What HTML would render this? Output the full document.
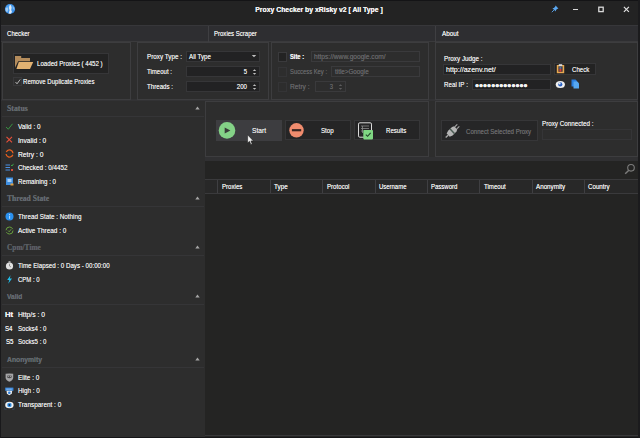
<!DOCTYPE html>
<html><head><meta charset="utf-8"><title>Proxy Checker by xRisky v2</title>
<style>
html,body{margin:0;padding:0;background:#2d2d2d;}
body{width:640px;height:438px;position:relative;overflow:hidden;font-family:"Liberation Sans",sans-serif;}
.a{position:absolute;}
.t{white-space:nowrap;text-shadow:0 0 0.5px currentColor;}
</style></head><body>
<div class="a" style="left:0px;top:0px;width:640px;height:26px;background:#232323;"></div>
<svg class="a" style="left:4px;top:3px" width="12" height="12" viewBox="0 0 12 12"><defs><radialGradient id="gg" cx="0.45" cy="0.4" r="0.65"><stop offset="0" stop-color="#55a8f2"/><stop offset="1" stop-color="#2f86e4"/></radialGradient></defs><circle cx="6" cy="6" r="5.100" fill="url(#gg)"/><path d="M5.400 2.400 L6.900 2.100 L7.600 4.500 L7.200 7 L8 9 L6.600 10.800 L4.500 10.500 L5.600 7.500 L5 5 Z" fill="#eef2f6" opacity="0.92"/><path d="M1.400 5.500 L3.200 4 L4.200 6 L3.400 9.200 L1.800 8.200 Z" fill="#b4d6f6" opacity="0.85"/><path d="M8.500 3 L10.200 4.500 L10.500 7.200 L9 6 Z" fill="#9ccaf6" opacity="0.75"/></svg>
<div class="a t" style="top:5.2px;line-height:10px;font-size:7.6px;color:#f0f0f0;font-weight:bold;left:119.25px;width:400px;text-align:center;transform:scaleX(0.901);transform-origin:50% 50%;">Proxy Checker by xRisky v2 [ All Type ]</div>
<svg class="a" style="left:551px;top:5px" width="8" height="8" viewBox="0 0 8 8"><path d="M4.6 0.6 L7.4 3.4 L6.2 3.9 L5 5.1 L4.8 6.6 L1.4 3.2 L2.9 3 L4.1 1.8 Z" fill="#5aa6ee"/><path d="M3 5 L0.8 7.200" stroke="#5aa6ee" stroke-width="0.9"/></svg>
<div class="a" style="left:573px;top:9px;width:5px;height:1px;background:#d8d8d8;"></div>
<svg class="a" style="left:597px;top:5px" width="8" height="9" viewBox="0 0 8 9"><rect x="1.800" y="2.200" width="4.400" height="4.400" fill="none" stroke="#dadada" stroke-width="1.3"/></svg>
<svg class="a" style="left:623px;top:6px" width="7" height="7" viewBox="0 0 7 7"><path d="M0.9 0.9 L5.900 5.900 M5.900 0.9 L0.9 5.900" stroke="#e0e0e0" stroke-width="1.2"/></svg>
<div class="a" style="left:0px;top:26px;width:640px;height:16px;background:#2e2e31;"></div>
<div class="a" style="left:0px;top:25px;width:640px;height:1px;background:#37373a;"></div>
<div class="a" style="left:0px;top:41px;width:640px;height:1px;background:#3a3a3c;"></div>
<div class="a" style="left:208px;top:26px;width:1px;height:16px;background:#3f3f42;"></div>
<div class="a" style="left:435px;top:26px;width:1px;height:16px;background:#3f3f42;"></div>
<div class="a t" style="top:29.3px;line-height:10px;font-size:7.2px;color:#e8e8e8;left:7px;transform:scaleX(0.843);transform-origin:0 50%;">Checker</div>
<div class="a t" style="top:29.3px;line-height:10px;font-size:7.2px;color:#e8e8e8;left:213.8px;transform:scaleX(0.838);transform-origin:0 50%;">Proxies Scraper</div>
<div class="a t" style="top:29.3px;line-height:10px;font-size:7.2px;color:#e8e8e8;left:441.7px;transform:scaleX(0.877);transform-origin:0 50%;">About</div>
<div class="a" style="left:0px;top:42px;width:640px;height:396px;background:#2d2d2d;"></div>
<div class="a" style="left:1px;top:99.3px;width:636.5px;height:2px;background:#323234;"></div>
<div class="a" style="left:2px;top:42px;width:129px;height:57.5px;border:1px solid #3d3d3f;box-sizing:border-box;"></div>
<div class="a" style="left:137px;top:42px;width:132px;height:57.5px;border:1px solid #3d3d3f;box-sizing:border-box;"></div>
<div class="a" style="left:271px;top:42px;width:158px;height:57.5px;border:1px solid #3d3d3f;box-sizing:border-box;"></div>
<div class="a" style="left:435px;top:42px;width:202.5px;height:57.5px;border:1px solid #3d3d3f;box-sizing:border-box;"></div>
<div class="a" style="left:12.7px;top:53.3px;width:96.2px;height:20.5px;background:#232323;border:1px solid #363638;box-sizing:border-box;"></div>
<svg class="a" style="left:14px;top:55px" width="20" height="15" viewBox="0 0 20 15"><path d="M1 1 L7.200 1 L7.200 3 L16 3 L16 6.300 L4.200 6.300 L1 12.800 Z" fill="#b48c5c"/><path d="M4.800 7 L19.200 7 L16 13.900 L2.400 13.900 Z" fill="#e2b272"/></svg>
<div class="a t" style="top:59.2px;line-height:10px;font-size:7.2px;color:#e2e2e2;left:37.2px;transform:scaleX(0.856);transform-origin:0 50%;">Loaded Proxies ( 4452 )</div>
<div class="a" style="left:12.5px;top:77px;width:9px;height:9px;border:1px solid #38383a;box-sizing:border-box;"></div>
<svg class="a" style="left:13.5px;top:78px" width="8" height="8" viewBox="0 0 8 8"><path d="M1.5 4 L3 5.800 L6.2 1.500" stroke="#d4d4d4" stroke-width="0.8" fill="none"/></svg>
<div class="a t" style="top:77.4px;line-height:10px;font-size:7.2px;color:#e2e2e2;left:23.1px;transform:scaleX(0.844);transform-origin:0 50%;">Remove Duplicate Proxies</div>
<div class="a t" style="top:52.0px;line-height:10px;font-size:7.2px;color:#e2e2e2;left:147px;transform:scaleX(0.878);transform-origin:0 50%;">Proxy Type :</div>
<div class="a t" style="top:67.0px;line-height:10px;font-size:7.2px;color:#e2e2e2;left:147px;transform:scaleX(0.841);transform-origin:0 50%;">Timeout :</div>
<div class="a t" style="top:82.0px;line-height:10px;font-size:7.2px;color:#e2e2e2;left:147px;transform:scaleX(0.855);transform-origin:0 50%;">Threads :</div>
<div class="a" style="left:186px;top:51.3px;width:74px;height:11px;background:#222223;border:1px solid #363638;box-sizing:border-box;"></div>
<div class="a" style="left:186px;top:66.3px;width:74px;height:11px;background:#222223;border:1px solid #363638;box-sizing:border-box;"></div>
<div class="a" style="left:186px;top:81.3px;width:74px;height:11px;background:#222223;border:1px solid #363638;box-sizing:border-box;"></div>
<div class="a t" style="top:52.0px;line-height:10px;font-size:7.2px;color:#e2e2e2;left:189.2px;transform:scaleX(0.863);transform-origin:0 50%;">All Type</div>
<svg class="a" style="left:251px;top:54.3px" width="6" height="4" viewBox="0 0 6 4"><path d="M0.8 0.9 L5.200 0.9 L3 3.3 Z" fill="#c0c0c0"/></svg>
<div class="a t" style="top:67.0px;line-height:10px;font-size:7.2px;color:#e2e2e2;right:393px;transform:scaleX(0.824);transform-origin:100% 50%;">5</div>
<div class="a t" style="top:82.0px;line-height:10px;font-size:7.2px;color:#e2e2e2;right:393px;transform:scaleX(0.858);transform-origin:100% 50%;">200</div>
<svg class="a" style="left:252px;top:68.3px" width="5" height="8" viewBox="0 0 5 8"><path d="M0.8 3 L2.500 1.2 L4.2 3 Z M0.8 5 L2.500 6.800 L4.2 5 Z" fill="#c0c0c0"/></svg>
<svg class="a" style="left:252px;top:83.3px" width="5" height="8" viewBox="0 0 5 8"><path d="M0.8 3 L2.500 1.2 L4.2 3 Z M0.8 5 L2.500 6.800 L4.2 5 Z" fill="#c0c0c0"/></svg>
<div class="a" style="left:278px;top:51.5px;width:9.2px;height:10px;background:#232323;border:1px solid #3a3a3c;box-sizing:border-box;"></div>
<div class="a" style="left:278px;top:66.5px;width:9.2px;height:10px;border:1px solid #343436;box-sizing:border-box;"></div>
<div class="a" style="left:278px;top:81.5px;width:9.2px;height:10px;border:1px solid #343436;box-sizing:border-box;"></div>
<div class="a t" style="top:52.0px;line-height:10px;font-size:7.2px;color:#ededed;font-weight:bold;left:290.3px;transform:scaleX(0.801);transform-origin:0 50%;">Site :</div>
<div class="a t" style="top:67.0px;line-height:10px;font-size:7.2px;color:#646466;left:290.3px;transform:scaleX(0.813);transform-origin:0 50%;">Success Key :</div>
<div class="a t" style="top:82.0px;line-height:10px;font-size:7.2px;color:#646466;left:290.3px;transform:scaleX(0.929);transform-origin:0 50%;">Retry :</div>
<div class="a" style="left:311px;top:51.3px;width:109px;height:11px;border:1px solid #3a3a3c;box-sizing:border-box;"></div>
<div class="a t" style="top:52.0px;line-height:10px;font-size:7.2px;color:#646466;left:314.2px;transform:scaleX(0.92);transform-origin:0 50%;">https://www.google.com/</div>
<div class="a" style="left:331px;top:66.3px;width:89px;height:11px;border:1px solid #3a3a3c;box-sizing:border-box;"></div>
<div class="a t" style="top:67.0px;line-height:10px;font-size:7.2px;color:#646466;left:334.7px;transform:scaleX(0.875);transform-origin:0 50%;">title&gt;Google</div>
<div class="a" style="left:315px;top:81.3px;width:31px;height:11px;border:1px solid #3a3a3c;box-sizing:border-box;"></div>
<div class="a t" style="top:82.0px;line-height:10px;font-size:7.2px;color:#646466;right:307px;transform:scaleX(0.824);transform-origin:100% 50%;">3</div>
<svg class="a" style="left:338px;top:83.3px" width="5" height="8" viewBox="0 0 5 8"><path d="M0.8 3 L2.500 1.2 L4.2 3 Z M0.8 5 L2.500 6.800 L4.2 5 Z" fill="#5c5c5e"/></svg>
<div class="a t" style="top:53.7px;line-height:10px;font-size:7.2px;color:#e2e2e2;left:443.8px;transform:scaleX(0.879);transform-origin:0 50%;">Proxy Judge :</div>
<div class="a" style="left:443px;top:64px;width:108px;height:11px;background:#222223;border:1px solid #363638;box-sizing:border-box;"></div>
<div class="a t" style="top:65.2px;line-height:10px;font-size:7.2px;color:#e2e2e2;left:445.7px;transform:scaleX(0.984);transform-origin:0 50%;">http://azenv.net/</div>
<div class="a" style="left:554.4px;top:63.2px;width:41.5px;height:11.4px;background:#232323;border:1px solid #363638;box-sizing:border-box;"></div>
<div class="a t" style="top:65.2px;line-height:10px;font-size:7.2px;color:#e2e2e2;left:571.7px;transform:scaleX(0.848);transform-origin:0 50%;">Check</div>
<svg class="a" style="left:556px;top:64px" width="9" height="10" viewBox="0 0 9 10"><rect x="0.800" y="1" width="7.400" height="8.200" fill="#e8a850"/><rect x="2.400" y="2.200" width="4.200" height="5.600" fill="#35353a"/><rect x="2.800" y="0.200" width="3.400" height="2" fill="#dcdcdc"/><rect x="3.400" y="4.800" width="2" height="2.800" fill="#d83a3a"/><rect x="3.400" y="3.300" width="2" height="1.300" fill="#5a8ad8"/></svg>
<div class="a t" style="top:79.7px;line-height:10px;font-size:7.2px;color:#e2e2e2;left:443.8px;transform:scaleX(0.87);transform-origin:0 50%;">Real IP :</div>
<div class="a" style="left:471.5px;top:78.8px;width:79.2px;height:11px;background:#222223;border:1px solid #363638;box-sizing:border-box;"></div>
<div class="a t" style="top:80.7px;line-height:10px;font-size:7.4px;color:#f4f4f4;left:474.7px;transform:scaleX(1.0);transform-origin:0 50%;letter-spacing:-0.41px;">●●●●●●●●●●●●●</div>
<svg class="a" style="left:555.3px;top:80px" width="11" height="9" viewBox="0 0 11 9"><ellipse cx="5.300" cy="4.400" rx="4.600" ry="3.500" fill="#f0f0f0"/><circle cx="5.300" cy="4.400" r="2.100" fill="#2a62c4"/><circle cx="4.600" cy="3.600" r="1" fill="#f0f0f0"/></svg>
<svg class="a" style="left:571.2px;top:79.2px" width="9" height="11" viewBox="0 0 9 11"><path d="M0.500 0.500 H4.500 L6 2 V7.500 H0.500 Z" fill="#2a7fe0"/><path d="M2.500 2.500 H6.300 L8 4.200 V9.600 H2.500 Z" fill="#56a8f2"/></svg>
<div class="a t" style="top:104.0px;line-height:10px;font-size:7.9px;color:#62686e;font-weight:bold;font-family:Liberation Serif,serif;left:7.1px;transform:scaleX(0.987);transform-origin:0 50%;">Status</div>
<svg class="a" style="left:194.5px;top:105.89999999999999px" width="5" height="4" viewBox="0 0 5 4"><path d="M0.3 3.500 L2.500 0.6 L4.700 3.500 Z" fill="#a6a6a6"/></svg>
<div class="a" style="left:2px;top:116.0px;width:202px;height:1px;background:#353537;"></div>
<div class="a t" style="top:194.0px;line-height:10px;font-size:7.9px;color:#62686e;font-weight:bold;font-family:Liberation Serif,serif;left:7.1px;transform:scaleX(0.958);transform-origin:0 50%;">Thread State</div>
<svg class="a" style="left:194.5px;top:195.9px" width="5" height="4" viewBox="0 0 5 4"><path d="M0.3 3.500 L2.500 0.6 L4.700 3.500 Z" fill="#a6a6a6"/></svg>
<div class="a" style="left:2px;top:206.0px;width:202px;height:1px;background:#353537;"></div>
<div class="a t" style="top:243.0px;line-height:10px;font-size:7.9px;color:#5a5e64;font-weight:bold;font-family:Liberation Serif,serif;left:7.1px;transform:scaleX(0.934);transform-origin:0 50%;">Cpm/Time</div>
<svg class="a" style="left:194.5px;top:244.9px" width="5" height="4" viewBox="0 0 5 4"><path d="M0.3 3.500 L2.500 0.6 L4.700 3.500 Z" fill="#a6a6a6"/></svg>
<div class="a" style="left:2px;top:255.0px;width:202px;height:1px;background:#353537;"></div>
<div class="a t" style="top:292.0px;line-height:10px;font-size:7.4px;color:#62686e;font-weight:bold;left:7.1px;transform:scaleX(0.886);transform-origin:0 50%;">Valid</div>
<svg class="a" style="left:194.5px;top:293.90000000000003px" width="5" height="4" viewBox="0 0 5 4"><path d="M0.3 3.500 L2.500 0.6 L4.700 3.500 Z" fill="#a6a6a6"/></svg>
<div class="a" style="left:2px;top:304.0px;width:202px;height:1px;background:#353537;"></div>
<div class="a t" style="top:355.0px;line-height:10px;font-size:7.4px;color:#62686e;font-weight:bold;left:7.1px;transform:scaleX(0.915);transform-origin:0 50%;">Anonymity</div>
<svg class="a" style="left:194.5px;top:356.90000000000003px" width="5" height="4" viewBox="0 0 5 4"><path d="M0.3 3.500 L2.500 0.6 L4.700 3.500 Z" fill="#a6a6a6"/></svg>
<div class="a" style="left:2px;top:367.0px;width:202px;height:1px;background:#353537;"></div>
<div class="a t" style="top:121.7px;line-height:10px;font-size:7.2px;color:#e2e2e2;left:17.7px;transform:scaleX(0.883);transform-origin:0 50%;">Valid : 0</div>
<div class="a t" style="top:135.5px;line-height:10px;font-size:7.2px;color:#e2e2e2;left:17.7px;transform:scaleX(0.918);transform-origin:0 50%;">Invalid : 0</div>
<div class="a t" style="top:149.8px;line-height:10px;font-size:7.2px;color:#e2e2e2;left:17.7px;transform:scaleX(0.937);transform-origin:0 50%;">Retry : 0</div>
<div class="a t" style="top:163.0px;line-height:10px;font-size:7.2px;color:#e2e2e2;left:17.7px;transform:scaleX(0.879);transform-origin:0 50%;">Checked : 0/4452</div>
<div class="a t" style="top:176.8px;line-height:10px;font-size:7.2px;color:#e2e2e2;left:17.7px;transform:scaleX(0.858);transform-origin:0 50%;">Remaining : 0</div>
<div class="a t" style="top:212.2px;line-height:10px;font-size:7.2px;color:#e2e2e2;left:17.7px;transform:scaleX(0.877);transform-origin:0 50%;">Thread State : Nothing</div>
<div class="a t" style="top:226.2px;line-height:10px;font-size:7.2px;color:#e2e2e2;left:17.7px;transform:scaleX(0.89);transform-origin:0 50%;">Active Thread : 0</div>
<div class="a t" style="top:261.2px;line-height:10px;font-size:7.2px;color:#e2e2e2;left:17.7px;transform:scaleX(0.861);transform-origin:0 50%;">Time Elapsed : 0 Days - 00:00:00</div>
<div class="a t" style="top:275.2px;line-height:10px;font-size:7.2px;color:#e2e2e2;left:17.7px;transform:scaleX(0.834);transform-origin:0 50%;">CPM : 0</div>
<div class="a t" style="top:310.2px;line-height:10px;font-size:7.2px;color:#e2e2e2;left:17.7px;transform:scaleX(0.937);transform-origin:0 50%;">Http/s : 0</div>
<div class="a t" style="top:324.2px;line-height:10px;font-size:7.2px;color:#e2e2e2;left:17.7px;transform:scaleX(0.848);transform-origin:0 50%;">Socks4 : 0</div>
<div class="a t" style="top:337.3px;line-height:10px;font-size:7.2px;color:#e2e2e2;left:17.7px;transform:scaleX(0.848);transform-origin:0 50%;">Socks5 : 0</div>
<div class="a t" style="top:372.7px;line-height:10px;font-size:7.2px;color:#e2e2e2;left:17.7px;transform:scaleX(0.887);transform-origin:0 50%;">Elite : 0</div>
<div class="a t" style="top:386.2px;line-height:10px;font-size:7.2px;color:#e2e2e2;left:17.7px;transform:scaleX(0.875);transform-origin:0 50%;">High : 0</div>
<div class="a t" style="top:400.2px;line-height:10px;font-size:7.2px;color:#e2e2e2;left:17.7px;transform:scaleX(0.892);transform-origin:0 50%;">Transparent : 0</div>
<svg class="a" style="left:5px;top:122.2px" width="9" height="9" viewBox="0 0 9 9"><path d="M1 5 L3.300 7.200 L7.500 1.800" stroke="#3a9e44" stroke-width="0.9" fill="none"/></svg>
<svg class="a" style="left:5px;top:135.3px" width="9" height="9" viewBox="0 0 9 9"><path d="M1.5 1.8 L7 7.300 M7 1.8 L1.5 7.300" stroke="#e8503a" stroke-width="1.1" fill="none"/></svg>
<svg class="a" style="left:4.6px;top:149.4px" width="9" height="9" viewBox="0 0 9 9"><circle cx="4.500" cy="4.500" r="3.500" stroke="#e8601e" stroke-width="1.3" fill="none" stroke-dasharray="9 2" transform="rotate(20 4.500 4.500)"/></svg>
<svg class="a" style="left:5px;top:163.2px" width="9" height="9" viewBox="0 0 9 9"><path d="M0.5 2 H5 M0.5 4.5 H5 M0.5 7 H5" stroke="#4a90e2" stroke-width="1"/><path d="M6 2 L7 3 L8.5 0.8" stroke="#3fae49" stroke-width="0.9" fill="none"/><path d="M6 6 L8 8 M8 6 L6 8" stroke="#e8503a" stroke-width="0.9"/></svg>
<svg class="a" style="left:5px;top:177.3px" width="9" height="9" viewBox="0 0 9 9"><rect x="1" y="0.5" width="7" height="7.5" fill="#3f8fe0"/><rect x="2.5" y="2" width="4" height="3" fill="#a8d0f8"/><rect x="5.5" y="6.5" width="3" height="2" fill="#e0a040"/></svg>
<svg class="a" style="left:4.7px;top:212.1px" width="9" height="9" viewBox="0 0 9 9"><circle cx="4.500" cy="4.500" r="4" fill="#2a90ee"/><rect x="4" y="3.800" width="1.100" height="3" fill="#bfe0fb" opacity="0.85"/><rect x="4" y="2" width="1.100" height="1.100" fill="#bfe0fb" opacity="0.85"/></svg>
<svg class="a" style="left:5px;top:226px" width="9" height="9" viewBox="0 0 9 9"><circle cx="4.5" cy="4.5" r="3.5" stroke="#6fae3f" stroke-width="0.9" fill="none" stroke-dasharray="9 2"/><path d="M3 4.5 L4.2 5.8 L6.2 3.2" stroke="#6fae3f" stroke-width="0.8" fill="none"/></svg>
<svg class="a" style="left:5px;top:261px" width="9" height="9" viewBox="0 0 9 9"><circle cx="4.5" cy="5" r="3.6" fill="#e0e0e0"/><rect x="3.5" y="0.3" width="2" height="1.3" fill="#d0d0d0"/><path d="M4.5 5 L4.5 2.8 M4.5 5 L6 6" stroke="#707070" stroke-width="0.7"/></svg>
<svg class="a" style="left:5px;top:275px" width="9" height="9" viewBox="0 0 9 9"><path d="M5.5 0.3 L2.2 5 L4.3 5 L3.2 8.8 L7 3.6 L4.8 3.6 Z" fill="#22c0ee"/></svg>
<div class="a t" style="top:309.9px;line-height:10px;font-size:7.8px;color:#f0f0f0;font-weight:bold;left:5.1px;transform:scaleX(0.984);transform-origin:0 50%;">Ht</div>
<div class="a t" style="top:323.7px;line-height:10px;font-size:7.6px;color:#f0f0f0;left:5.3px;transform:scaleX(0.807);transform-origin:0 50%;">S4</div>
<div class="a t" style="top:336.9px;line-height:10px;font-size:7.6px;color:#f0f0f0;left:5.5px;transform:scaleX(0.807);transform-origin:0 50%;">S5</div>
<svg class="a" style="left:5px;top:372.8px" width="9" height="9" viewBox="0 0 9 9"><path d="M0.600 0.800 Q4.500 0 8.200 0.800 L8.200 4.800 Q8 7.400 4.400 8.800 Q0.800 7.400 0.600 4.800 Z" fill="#a4a4a6"/><path d="M2 2.800 Q4.400 2 6.800 2.800 L6.800 4.300 Q4.400 6 2 4.300 Z" fill="#4a4a4c"/><rect x="2.600" y="3.200" width="1.300" height="0.800" fill="#b0b0b0"/><rect x="4.900" y="3.200" width="1.300" height="0.800" fill="#b0b0b0"/></svg>
<svg class="a" style="left:5px;top:386.7px" width="9" height="9" viewBox="0 0 9 9"><rect x="0.200" y="0.600" width="8.200" height="3.200" fill="#3a8ae0"/><path d="M1.500 2.200 H7.200" stroke="#e8f0f8" stroke-width="0.7" stroke-dasharray="1.2 0.7"/><path d="M1.500 3.800 L7.200 3.800 L6.800 6.800 L4.300 8.300 L1.900 6.800 Z" fill="#ececec"/><circle cx="4.300" cy="5.700" r="1.300" fill="#2f80dc"/></svg>
<svg class="a" style="left:4px;top:399.5px" width="11" height="10" viewBox="0 0 11 10"><path d="M0.600 2.500 V0.600 H2.800 M8 0.600 H10.200 V2.500 M10.200 7.500 V9.400 H8 M2.800 9.400 H0.600 V7.500" stroke="#34485e" stroke-width="0.7" fill="none"/><ellipse cx="5.400" cy="5" rx="4.200" ry="3.200" fill="#f2f2f2"/><circle cx="5.400" cy="5" r="2.300" fill="#3a9af0"/><circle cx="5.400" cy="5" r="1" fill="#1a2a48"/></svg>
<div class="a" style="left:204.5px;top:101px;width:224.5px;height:56px;border:1px solid #3d3d3f;box-sizing:border-box;"></div>
<div class="a" style="left:435px;top:101px;width:202.5px;height:56px;border:1px solid #3d3d3f;box-sizing:border-box;"></div>
<div class="a" style="left:216px;top:120.2px;width:66.1px;height:20.4px;background:#3d3d40;"></div>
<div class="a" style="left:285.2px;top:120.2px;width:65.8px;height:20px;background:#252526;border:1px solid #363638;box-sizing:border-box;"></div>
<div class="a" style="left:354.2px;top:120.2px;width:65.8px;height:20px;background:#252526;border:1px solid #363638;box-sizing:border-box;"></div>
<div class="a t" style="top:126.3px;line-height:10px;font-size:7.2px;color:#e2e2e2;left:251.9px;transform:scaleX(0.921);transform-origin:0 50%;">Start</div>
<div class="a t" style="top:126.3px;line-height:10px;font-size:7.2px;color:#e2e2e2;left:321.3px;transform:scaleX(0.857);transform-origin:0 50%;">Stop</div>
<div class="a t" style="top:126.3px;line-height:10px;font-size:7.2px;color:#e2e2e2;left:386.1px;transform:scaleX(0.85);transform-origin:0 50%;">Results</div>
<svg class="a" style="left:218px;top:121px" width="18" height="19" viewBox="0 0 18 19"><circle cx="9" cy="9.400" r="8.3" fill="#84d287"/><path d="M6.700 6.500 L12.400 9.500 L6.700 12.500 Z" fill="#3a3d3a"/></svg>
<svg class="a" style="left:288px;top:122px" width="17" height="17" viewBox="0 0 17 17"><circle cx="8.5" cy="8.300" r="7.2" fill="#f08c6e"/><rect x="3.900" y="7.100" width="9.300" height="2.200" fill="#3a2622"/></svg>
<svg class="a" style="left:356px;top:121px" width="19" height="20" viewBox="0 0 19 20"><rect x="2.500" y="1.800" width="13" height="14.400" rx="1.3" fill="none" stroke="#dcdcdc" stroke-width="1"/><path d="M5 5 H13 M5 7.500 H13 M5 10 H7 M6.500 5 V12" stroke="#8c8c8c" stroke-width="0.8" fill="none"/><rect x="7.300" y="9" width="9.700" height="9.400" rx="0.8" fill="#7fd783"/><path d="M9.800 13.600 L11.600 15.300 L14.600 11.800" stroke="#23422a" stroke-width="1.1" fill="none"/></svg>
<div class="a" style="left:441px;top:120.3px;width:97.2px;height:21.1px;background:#262627;border:1px solid #363638;box-sizing:border-box;"></div>
<div class="a t" style="top:127.2px;line-height:10px;font-size:7.2px;color:#68686a;left:466.4px;transform:scaleX(0.845);transform-origin:0 50%;">Connect Selected Proxy</div>
<svg class="a" style="left:444px;top:123px" width="17" height="16" viewBox="0 0 17 16"><g transform="rotate(-44 8.500 8)"><rect x="-1" y="7.300" width="3.500" height="1.400" fill="#a8a8a8"/><path d="M2.500 5.800 L5.500 4.800 L11 4.800 L13 5.800 L13 10.200 L11 11.200 L5.500 11.200 L2.500 10.200 Z" fill="#b4b4b4"/><rect x="7.400" y="4.600" width="1.500" height="6.800" fill="#4a5a52"/><rect x="13" y="6" width="3.600" height="1.100" fill="#a8a8a8"/><rect x="13" y="8.900" width="3.600" height="1.100" fill="#a8a8a8"/></g></svg>
<div class="a t" style="top:119.3px;line-height:10px;font-size:7.2px;color:#e2e2e2;left:542px;transform:scaleX(0.871);transform-origin:0 50%;">Proxy Connected :</div>
<div class="a" style="left:541.5px;top:129px;width:90px;height:11px;border:1px solid #353537;box-sizing:border-box;"></div>
<div class="a" style="left:204.5px;top:157px;width:433px;height:3.5px;background:#303032;"></div>
<div class="a" style="left:204.5px;top:160.5px;width:433px;height:18.5px;background:#242423;"></div>
<svg class="a" style="left:624px;top:163px" width="12" height="12" viewBox="0 0 12 12"><circle cx="7" cy="4.800" r="3.3" stroke="#7c7c7c" stroke-width="1.1" fill="none"/><path d="M4.6 7.400 L1.2 10.800" stroke="#7c7c7c" stroke-width="1.4"/></svg>
<div class="a" style="left:204.5px;top:179px;width:433px;height:14.5px;background:#282828;"></div>
<div class="a" style="left:204.5px;top:178.7px;width:433px;height:1px;background:#3a3a3c;"></div>
<div class="a" style="left:204.5px;top:192.7px;width:433px;height:1px;background:#3a3a3c;"></div>
<div class="a" style="left:217.4px;top:179.5px;width:1px;height:13px;background:#3f3f42;"></div>
<div class="a t" style="top:182.0px;line-height:10px;font-size:7.2px;color:#e8e8e8;left:221.7px;transform:scaleX(0.85);transform-origin:0 50%;">Proxies</div>
<div class="a" style="left:269.8px;top:179.5px;width:1px;height:13px;background:#3f3f42;"></div>
<div class="a t" style="top:182.0px;line-height:10px;font-size:7.2px;color:#e8e8e8;left:274.4px;transform:scaleX(0.884);transform-origin:0 50%;">Type</div>
<div class="a" style="left:322.2px;top:179.5px;width:1px;height:13px;background:#3f3f42;"></div>
<div class="a t" style="top:182.0px;line-height:10px;font-size:7.2px;color:#e8e8e8;left:326.8px;transform:scaleX(0.852);transform-origin:0 50%;">Protocol</div>
<div class="a" style="left:374.6px;top:179.5px;width:1px;height:13px;background:#3f3f42;"></div>
<div class="a t" style="top:182.0px;line-height:10px;font-size:7.2px;color:#e8e8e8;left:378.9px;transform:scaleX(0.828);transform-origin:0 50%;">Username</div>
<div class="a" style="left:427.0px;top:179.5px;width:1px;height:13px;background:#3f3f42;"></div>
<div class="a t" style="top:182.0px;line-height:10px;font-size:7.2px;color:#e8e8e8;left:431px;transform:scaleX(0.835);transform-origin:0 50%;">Password</div>
<div class="a" style="left:479.4px;top:179.5px;width:1px;height:13px;background:#3f3f42;"></div>
<div class="a t" style="top:182.0px;line-height:10px;font-size:7.2px;color:#e8e8e8;left:483.6px;transform:scaleX(0.847);transform-origin:0 50%;">Timeout</div>
<div class="a" style="left:531.8px;top:179.5px;width:1px;height:13px;background:#3f3f42;"></div>
<div class="a t" style="top:182.0px;line-height:10px;font-size:7.2px;color:#e8e8e8;left:535.8px;transform:scaleX(0.869);transform-origin:0 50%;">Anonymity</div>
<div class="a" style="left:584.2px;top:179.5px;width:1px;height:13px;background:#3f3f42;"></div>
<div class="a t" style="top:182.0px;line-height:10px;font-size:7.2px;color:#e8e8e8;left:588.3px;transform:scaleX(0.861);transform-origin:0 50%;">Country</div>
<div class="a" style="left:204.5px;top:193.7px;width:433px;height:243px;background:#242423;"></div>
<svg class="a" style="left:246.8px;top:133.5px" width="8" height="12" viewBox="0 0 8 12"><path d="M0.6 0.8 L0.6 9 L2.500 7.300 L3.800 10.500 L5.200 9.900 L3.900 6.900 L6.400 6.900 Z" fill="#f4f4f4" stroke="#1a1a1a" stroke-width="0.55"/></svg>
<div class="a" style="left:204.5px;top:435.3px;width:433px;height:1px;background:#38383a;"></div>
<div class="a" style="left:0px;top:0px;width:640px;height:1px;background:#141416;"></div>
<div class="a" style="left:0px;top:436.8px;width:640px;height:1.2px;background:#151517;"></div>
<div class="a" style="left:0px;top:0px;width:1.4px;height:438px;background:#19191b;"></div>
<div class="a" style="left:637.5px;top:0px;width:2.5px;height:438px;background:#1b1b1d;"></div>
</body></html>
